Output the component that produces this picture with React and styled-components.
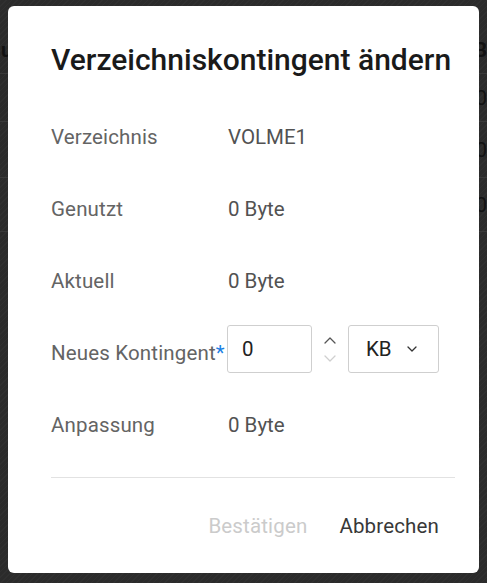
import React, { useState } from "react";
import styled, { createGlobalStyle } from "styled-components";

const Global = createGlobalStyle`
  html, body { margin: 0; padding: 0; }
  body {
    width: 487px;
    height: 583px;
    overflow: hidden;
    font-family: Roboto, "Liberation Sans", Arial, sans-serif;
    background-color: #2b2b2b;
    background-image: repeating-linear-gradient(135deg, rgba(255,255,255,.025) 0 1px, transparent 1px 4px);
  }
`;

const Page = styled.div`
  position: relative;
  width: 487px;
  height: 583px;
`;

const BgTable = styled.div`
  display: flex;
  flex-direction: column;
  padding-top: 27px;
`;

const BgRow = styled.div`
  display: flex;
  justify-content: space-between;
  align-items: center;
  height: ${p => p.$h}px;
  border-bottom: 1px solid #3a3a3a;
  color: #121212;
  font-size: 20px;
  font-weight: ${p => (p.$bold ? 700 : 400)};
  padding: 0 0 0 1px;
`;

const Overlay = styled.div`
  position: absolute;
  inset: 0;
  display: flex;
  align-items: flex-start;
  justify-content: center;
  padding-top: 6px;
`;

const Modal = styled.div`
  width: 471px;
  height: 567px;
  box-sizing: border-box;
  background: #fff;
  border-radius: 6px;
  padding: 36px 24px 0 43px;
  display: flex;
  flex-direction: column;
`;

const Title = styled.h2`
  margin: 0 0 23px;
  font-size: 30px;
  line-height: 36px;
  font-weight: 500;
  color: #1a1a1a;
  flex-shrink: 0;
`;

const Rows = styled.div`
  display: flex;
  flex-direction: column;
  flex-shrink: 0;
`;

const Row = styled.div`
  display: flex;
  align-items: center;
  height: 72px;
  font-size: 20.5px;
`;

const Label = styled.div`
  width: 176px;
  flex: 0 0 176px;
  color: #646464;
  white-space: nowrap;
  letter-spacing: 0.15px;
`;

const Req = styled.span`
  color: #1a7fe4;
`;

const Value = styled.div`
  color: #525252;
  padding-left: 1px;
`;

const Controls = styled.div`
  display: flex;
  align-items: center;
  margin-bottom: 8px;
`;

const Box = styled.div`
  box-sizing: border-box;
  height: 48px;
  width: ${p => p.$w}px;
  border: 1px solid #cfcfcf;
  border-radius: 3px;
  display: flex;
  align-items: center;
  padding-left: ${p => p.$pl}px;
  color: #222;
  font-size: 20.5px;
  background: #fff;
`;

const NumInput = styled.input`
  border: 0;
  outline: 0;
  width: 100%;
  font: inherit;
  color: inherit;
  padding: 0;
  background: transparent;
`;

const Spin = styled.div`
  width: 36px;
  display: flex;
  flex-direction: column;
  align-items: center;
  gap: 11px;
`;

const SpinBtn = styled.button`
  border: 0;
  background: none;
  padding: 0;
  display: flex;
  color: ${p => (p.$off ? "#cfcfcf" : "#555")};
  cursor: pointer;
`;

const Caret = styled.span`
  margin-left: 15px;
  display: flex;
  color: #333;
`;

const Divider = styled.div`
  height: 1px;
  flex-shrink: 0;
  background: #e2e2e2;
  margin-top: 16px;
`;

const Footer = styled.div`
  display: flex;
  justify-content: flex-end;
  padding-top: 24px;
  flex-shrink: 0;
`;

const Btn = styled.button`
  border: 0;
  background: none;
  height: 48px;
  padding: 0 16px;
  font-family: inherit;
  font-size: 20.5px;
  letter-spacing: 0.15px;
  color: ${p => (p.$disabled ? "#cbcbcb" : "#383838")};
  cursor: ${p => (p.$disabled ? "default" : "pointer")};
`;

const Chev = ({ up }) => (
  <svg width="12" height="7" viewBox="0 0 12 7" fill="none" stroke="currentColor" strokeWidth="1.3" strokeLinecap="round" strokeLinejoin="round">
    {up ? <path d="M1 6l5-5 5 5" /> : <path d="M1 1l5 5 5-5" />}
  </svg>
);

const SmallChev = () => (
  <svg width="10" height="6" viewBox="0 0 10 6" fill="none" stroke="currentColor" strokeWidth="1.3" strokeLinecap="round" strokeLinejoin="round">
    <path d="M1 1l4 4 4-4" />
  </svg>
);

export default function App() {
  const [val, setVal] = useState("0");
  return (
    <>
      <Global />
      <Page>
        <BgTable>
          <BgRow $h={46} $bold><span>u</span><span>B</span></BgRow>
          <BgRow $h={47}><span></span><span>0</span></BgRow>
          <BgRow $h={55}><span></span><span>0</span></BgRow>
          <BgRow $h={53}><span></span><span>0</span></BgRow>
        </BgTable>
        <Overlay>
          <Modal>
            <Title>Verzeichniskontingent ändern</Title>
            <Rows>
              <Row><Label>Verzeichnis</Label><Value>VOLME1</Value></Row>
              <Row><Label>Genutzt</Label><Value>0 Byte</Value></Row>
              <Row><Label>Aktuell</Label><Value>0 Byte</Value></Row>
              <Row>
                <Label>Neues Kontingent<Req>*</Req></Label>
                <Controls>
                  <Box $w={85} $pl={14}>
                    <NumInput value={val} onChange={e => setVal(e.target.value)} />
                  </Box>
                  <Spin>
                    <SpinBtn><Chev up /></SpinBtn>
                    <SpinBtn $off><Chev /></SpinBtn>
                  </Spin>
                  <Box $w={91} $pl={17}>
                    KB
                    <Caret><SmallChev /></Caret>
                  </Box>
                </Controls>
              </Row>
              <Row><Label>Anpassung</Label><Value>0 Byte</Value></Row>
            </Rows>
            <Divider />
            <Footer>
              <Btn $disabled>Bestätigen</Btn>
              <Btn>Abbrechen</Btn>
            </Footer>
          </Modal>
        </Overlay>
      </Page>
    </>
  );
}
